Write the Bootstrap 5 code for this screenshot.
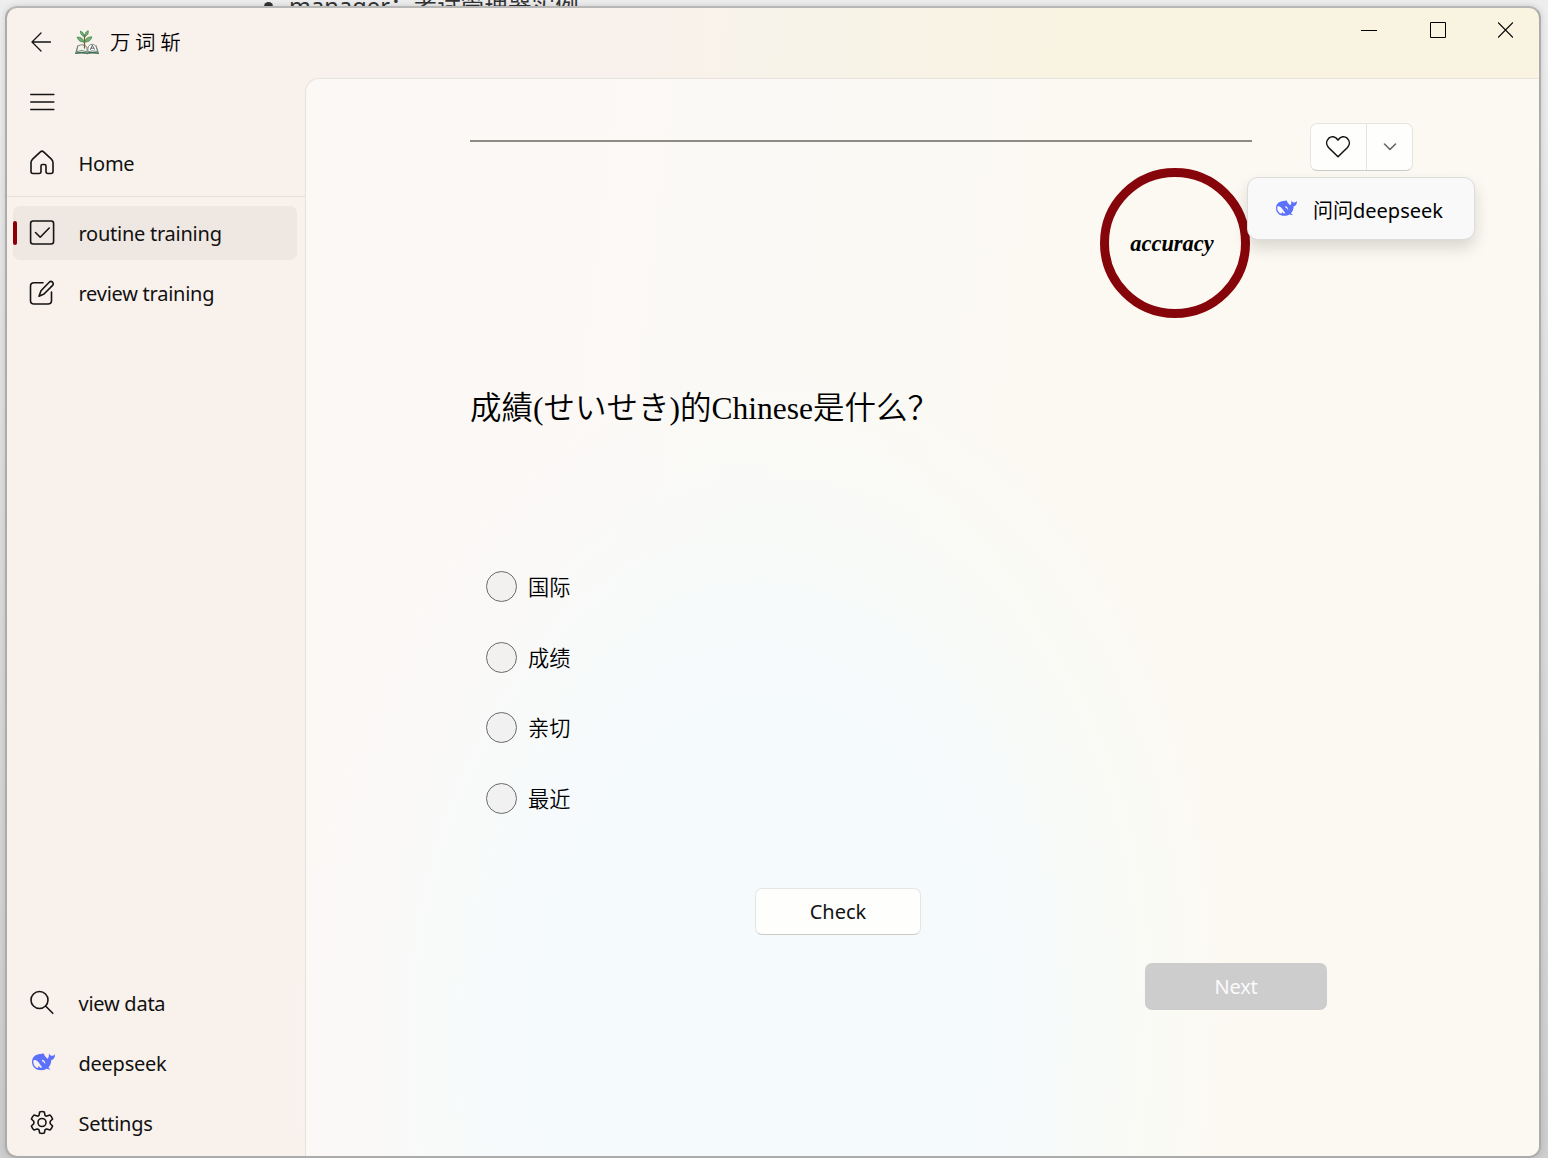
<!DOCTYPE html>
<html lang="zh">
<head>
<meta charset="utf-8">
<title>万词斩</title>
<link href="https://cdn.jsdelivr.net/npm/bootstrap@5.3.0/dist/css/bootstrap.min.css" rel="stylesheet">
<style>
  body { font-family: "Noto Sans", "Noto Sans CJK SC", sans-serif; font-size: 20px; line-height: 1.4; color: #111;
    width: 1548px; height: 1158px; background: linear-gradient(#eeeeee, #dedede 45%, #cecece); letter-spacing: -.25px; }
  svg { display: block; fill: none; stroke: #151515; stroke-width: 1.6; stroke-linecap: round; stroke-linejoin: round; flex: none; }
  .behind { left: 264px; top: -9px; font-size: 23.5px; line-height: 30px; color: #333; white-space: nowrap; letter-spacing: .1px; }
  .behind i { width: 9px; height: 9px; border-radius: 50%; background: #333; margin: 1px 16px 0 0; }
  .app-window { left: 5px; top: 6px; width: 1536px; height: 1152px; border: 2px solid #acacac; border-top-color: #b7b7b5; border-radius: 12px; box-shadow: 0 0 7px rgba(0,0,0,.14);
    background: linear-gradient(97deg, #f9f1ec 0, #f9f1ec 36%, #f7f3e9 47%, #f9f3e1 66%, #f9f3e0 100%); }
  .glow { inset: 0; border-radius: 10px; overflow: hidden; }
  .glow::before { content: ""; position: absolute; left: 285px; top: 350px; width: 940px; height: 1350px; transform: rotate(3deg);
    background: radial-gradient(closest-side, rgba(233,246,253,1) 0, rgba(233,246,253,.95) 50%, rgba(236,245,246,.5) 78%, rgba(242,244,238,0) 100%); }
  .app-window > header, .app-window > .d-flex { position: relative; }
  .title-bar { height: 70px; }
  .app-name { font-size: 20.5px; letter-spacing: 4.6px; color: #000; margin: -2px 0 0 11px; line-height: 30px; font-weight: 350; }
  .caption-buttons { gap: 52px; padding: 14px 26px 0 0; }
  .caption-buttons svg { stroke: #000; stroke-width: 1; stroke-linecap: butt; stroke-linejoin: miter; }
  .sidebar { width: 298px; padding: 0 8px 3px 6px; }
  .side-item { height: 54px; margin: 3px 0; padding-left: 15.500px; border-radius: 7px; color: #111; gap: 24px; position: relative; text-decoration: none; }
  .side-item span { padding-top: 1px; }
  .side-item.current { background: #efe7e2; }
  .side-item.current::before { content: ""; position: absolute; left: 0; top: 15px; width: 4px; height: 24px; border-radius: 2px; background: #8b0008; }
  .divider { height: 1px; margin: 3px -8px 3px -6px; background: #e8deda; }
  .panel { border: 1px solid #e8e3dc; border-width: 1px 0 0 1px; border-radius: 14px 0 10px 0; background: rgba(254,253,253,.6); padding: 44px 0 0 164px; }
  .progress-line { width: 782px; height: 2px; margin-top: 17px; background: #8b8a83; }
  .soft-btn { background: #fefefd; border: 1px solid #e6e5e1; border-bottom-color: #cacac7; border-radius: 7px; }
  .split-btn { width: 103px; height: 48px; margin-left: 58px; }
  .split-btn .heart-part { width: 56px; border-right: 1px solid #e6e5e1; padding-right: 1px; }
  .ring { width: 150px; height: 150px; border: 9px solid #86050b; border-radius: 50%; margin: -3px 0 0 630px; }
  .ring b { font: italic bold 22.4px/1 "Liberation Serif", serif; letter-spacing: 0; color: #000; margin: 3px 6px 0 0; }
  .menu-pop { left: 1240px; top: 169px; width: 228px; height: 63px; background: #f9f9f9; border: 1px solid #dcdcda; border-radius: 11px; box-shadow: 0 8px 16px rgba(0,0,0,.14); padding: 5px 0 0 28px; gap: 16px; color: #000; letter-spacing: 0; }
  .menu-pop svg { margin-top: -6px; }
  .question { font-family: "Liberation Serif", "Noto Sans CJK JP", serif; font-size: 31.5px; line-height: 46px; margin: 68px 0 0; font-weight: 350; letter-spacing: 0; color: #000; }
  .choices { margin: 139px 0 0 16px; }
  .choice { height: 70.5px; gap: 11px; color: #000; font-size: 21.200px; letter-spacing: 0; font-weight: 350; }
  .choice .form-check-input { width: 31px; height: 31px; margin: 0; border: 1.5px solid #6b6b6b; background-color: rgba(240,238,237,.75); }
  .choice span { padding-top: 1px; line-height: 30px; }
  .check-btn { width: 166px; height: 47px; margin: 74px 0 0 285px; padding-top: 2px; color: #111; letter-spacing: 0; }
  .next-btn { width: 182px; height: 47px; margin: 28px 0 0 675px; padding-top: 2px; background: #cdcdcd; color: #fbfbfb; border-radius: 7px; }
  .whale { fill: #5b70fb; stroke: none; fill-rule: evenodd; }
</style>
</head>
<body class="position-relative overflow-hidden">
<svg width="0" height="0" class="position-absolute">
  <symbol id="whale" viewBox="0 0 69 52">
    <path d="M0 27C0 12 11 4 24 3L35 1C38 4 36 7 41 11L46 17C51 14 50 8 51 1C54 7 58 9 61 8C64 8 66 5 69 4C69 14 65 19 58 21C57 32 54 39 49 43L56 50L43 47C34 54 16 53 8 45C3 40 0 34 0 27ZM4 25C4 34 9 43 18 45L20 39L25 44L31 43C25 36 22 29 15 23C11 20 4 19 4 25ZM31 20L29 23L36 28L40 33C40 27 37 20 31 20Z"/>
  </symbol>
</svg>
<div class="behind position-absolute d-flex align-items-center"><i class="d-inline-block"></i><span>manager：考试管理器实例</span></div>

<div class="app-window position-absolute d-flex flex-column">
  <div class="glow position-absolute"></div>
  <header class="title-bar d-flex">
    <div class="d-flex align-items-center flex-grow-1" style="padding-left:24px">
      <svg width="20" height="20" viewBox="0 0 20 20" style="margin-top:-2px"><path d="M19.500 10H1M10 1L1 10l9 9" stroke-width="1.3"/></svg>
      <svg width="24" height="25" viewBox="0 0 24 25" style="margin:-1px 0 0 24px">
        <g stroke-width=".8" stroke="#5a6f62">
          <path d="M3 15.500L.7 23h10l1.500.8 1.500-.8h9.700L21 15.500" fill="#fff"/>
          <path d="M3 16q5-3 9 1v5q-5-3-10-.5z" fill="#f4f4ee"/>
          <path d="M13 22v-4c1-5 7-5 8.500 0l1 3.600Q17 19.500 13 22z" fill="#fff"/>
          <path d="M15.500 19.500l1.800-4.300 2.200 4.100M16 18.200h2.700" stroke="#444"/>
          <path d="M.7 23.300q6-1.600 11.300 0 5-1.600 11.400 0" stroke="#3c7050" stroke-width="1.300"/>
          <path d="M9.500 18V5" stroke="#855f2e" stroke-width="1.300"/>
          <path d="M9 6.500Q5 5 5.500 1 9 2 9 6.500zM10 6.500Q9.500 2 13.200.7 14 5 10 6.500zM9 12Q4 12.500 2 7.200 7.500 6.500 9 12zM10 12q0-5 6.800-5.200Q16 12 10 12z" fill="#70b171" stroke="#4d8a5c"/>
        </g>
      </svg>
      <span class="app-name">万词斩</span>
    </div>
    <div class="caption-buttons d-flex">
      <svg width="16" height="16" viewBox="0 0 16 16"><path d="M0 8.500h16"/></svg>
      <svg width="17" height="16" viewBox="0 0 17 16"><path d="M1.500.5h15v15h-15z"/></svg>
      <svg width="15" height="16" viewBox="0 0 15 16"><path d="M0 .5l15 15M15 .5l-15 15" stroke-width="1.200"/></svg>
    </div>
  </header>

  <div class="d-flex flex-grow-1">
    <nav class="sidebar d-flex flex-column">
      <a class="side-item d-flex align-items-center" style="margin:-3px 0 4px">
        <svg width="26" height="20" viewBox="0 0 26 20"><path d="M1.800 2.500h23M1.800 10h23M1.800 17.500h23"/></svg>
      </a>
      <a class="side-item d-flex align-items-center">
        <svg width="26" height="26" viewBox="0 0 26 26"><path d="M3.600 9.700L11.400 2.400q1.600-1.400 3.200 0l7.800 7.300q1.600 1.500 1.600 3.600V22q0 2-2 2h-3q-2 0-2-2v-5.500q0-1.500-1.500-1.500h-2q-1.500 0-1.500 1.500V22q0 2-2 2H4q-2 0-2-2v-8.700q0-2.100 1.600-3.600z" transform="translate(0 -.5)"/></svg>
        <span>Home</span>
      </a>
      <div class="divider"></div>
      <a class="side-item current d-flex align-items-center" style="margin-top:6px">
        <svg width="26" height="26" viewBox="0 0 26 26"><rect x="1.600" y="1" width="23" height="23" rx="2.500"/><path d="M6.500 12.500l4.700 4.700 9-9.200"/></svg>
        <span>routine training</span>
      </a>
      <a class="side-item d-flex align-items-center">
        <svg width="26" height="26" viewBox="0 0 26 26"><path d="M14 2.800H5q-3.500 0-3.500 3.500v14.500q0 3.200 3.500 3.200h14q3.500 0 3.500-3.200V12"/><path d="M20.200 2.200q1.500-1.500 3.200-.2 1.600 1.700.2 3.400L15 14l-5 2.200 2-5.500z"/></svg>
        <span>review training</span>
      </a>
      <a class="side-item d-flex align-items-center mt-auto">
        <svg width="26" height="26" viewBox="0 0 26 26"><circle cx="10.500" cy="10" r="8.500"/><path d="M16.800 16.300l7 7"/></svg>
        <span>view data</span>
      </a>
      <a class="side-item d-flex align-items-center">
        <svg class="whale" width="26" height="19" viewBox="0 0 26 19" style="margin-top:-1px"><use href="#whale" x="3" y="0" width="23" height="17.500"/></svg>
        <span>deepseek</span>
      </a>
      <a class="side-item d-flex align-items-center">
        <svg width="26" height="26" viewBox="0 0 26 26"><path d="M10.700 1.900Q13 1.100 15.300 1.900L16 5.300Q16.800 6 17.800 6.100L21 5Q22.800 6.600 23.600 9L21.300 11.300Q20.800 12.500 21.300 13.700L23.600 16Q22.800 18.400 21 20L17.800 19Q16.800 19.100 16 19.800L15.300 23.100Q13 23.900 10.700 23.100L10 19.800Q9.200 19.100 8.200 19L5 20Q3.200 18.400 2.400 16L4.700 13.700Q5.200 12.500 4.700 11.300L2.400 9Q3.200 6.600 5 5L8.200 6.100Q9.200 6 10 5.300Z"/><circle cx="13" cy="12.500" r="4"/></svg>
        <span>Settings</span>
      </a>
    </nav>

    <main class="panel flex-grow-1 d-flex flex-column">
      <div class="d-flex">
        <div class="progress-line"></div>
        <div class="soft-btn split-btn d-flex">
          <div class="heart-part d-flex align-items-center justify-content-center">
            <svg width="26" height="24" viewBox="0 0 26 24"><path d="M13 5C10.500 1.200 6.500.800 3.800 3.200 1 6 1 9.800 3.500 12.500L13 21.800l9.500-9.300C25 9.800 25 6 22.200 3.200 19.500.800 15.500 1.200 13 5z"/></svg>
          </div>
          <div class="flex-grow-1 d-flex align-items-center justify-content-center">
            <svg width="14" height="8" viewBox="0 0 14 8" style="stroke:#666"><path d="M1.500 1L7 6.500 12.500 1"/></svg>
          </div>
        </div>
      </div>
      <div class="ring d-flex align-items-center justify-content-center"><b>accuracy</b></div>
      <h1 class="question">成績(せいせき)的Chinese是什么？</h1>
      <div class="choices">
        <label class="choice d-flex align-items-start"><input class="form-check-input" type="radio" name="answer"><span>国际</span></label>
        <label class="choice d-flex align-items-start"><input class="form-check-input" type="radio" name="answer"><span>成绩</span></label>
        <label class="choice d-flex align-items-start"><input class="form-check-input" type="radio" name="answer"><span>亲切</span></label>
        <label class="choice d-flex align-items-start" style="height:31px"><input class="form-check-input" type="radio" name="answer"><span>最近</span></label>
      </div>
      <div class="soft-btn check-btn d-flex align-items-center justify-content-center">Check</div>
      <div class="next-btn d-flex align-items-center justify-content-center">Next</div>
    </main>
  </div>

  <div class="menu-pop d-flex align-items-center position-absolute" style="position:absolute">
    <svg class="whale" width="21" height="16" viewBox="0 0 69 52"><use href="#whale" width="69" height="52"/></svg>
    <span>问问deepseek</span>
  </div>
</div>
<script src="https://cdn.jsdelivr.net/npm/bootstrap@5.3.0/dist/js/bootstrap.bundle.min.js"></script>
</body>
</html>
